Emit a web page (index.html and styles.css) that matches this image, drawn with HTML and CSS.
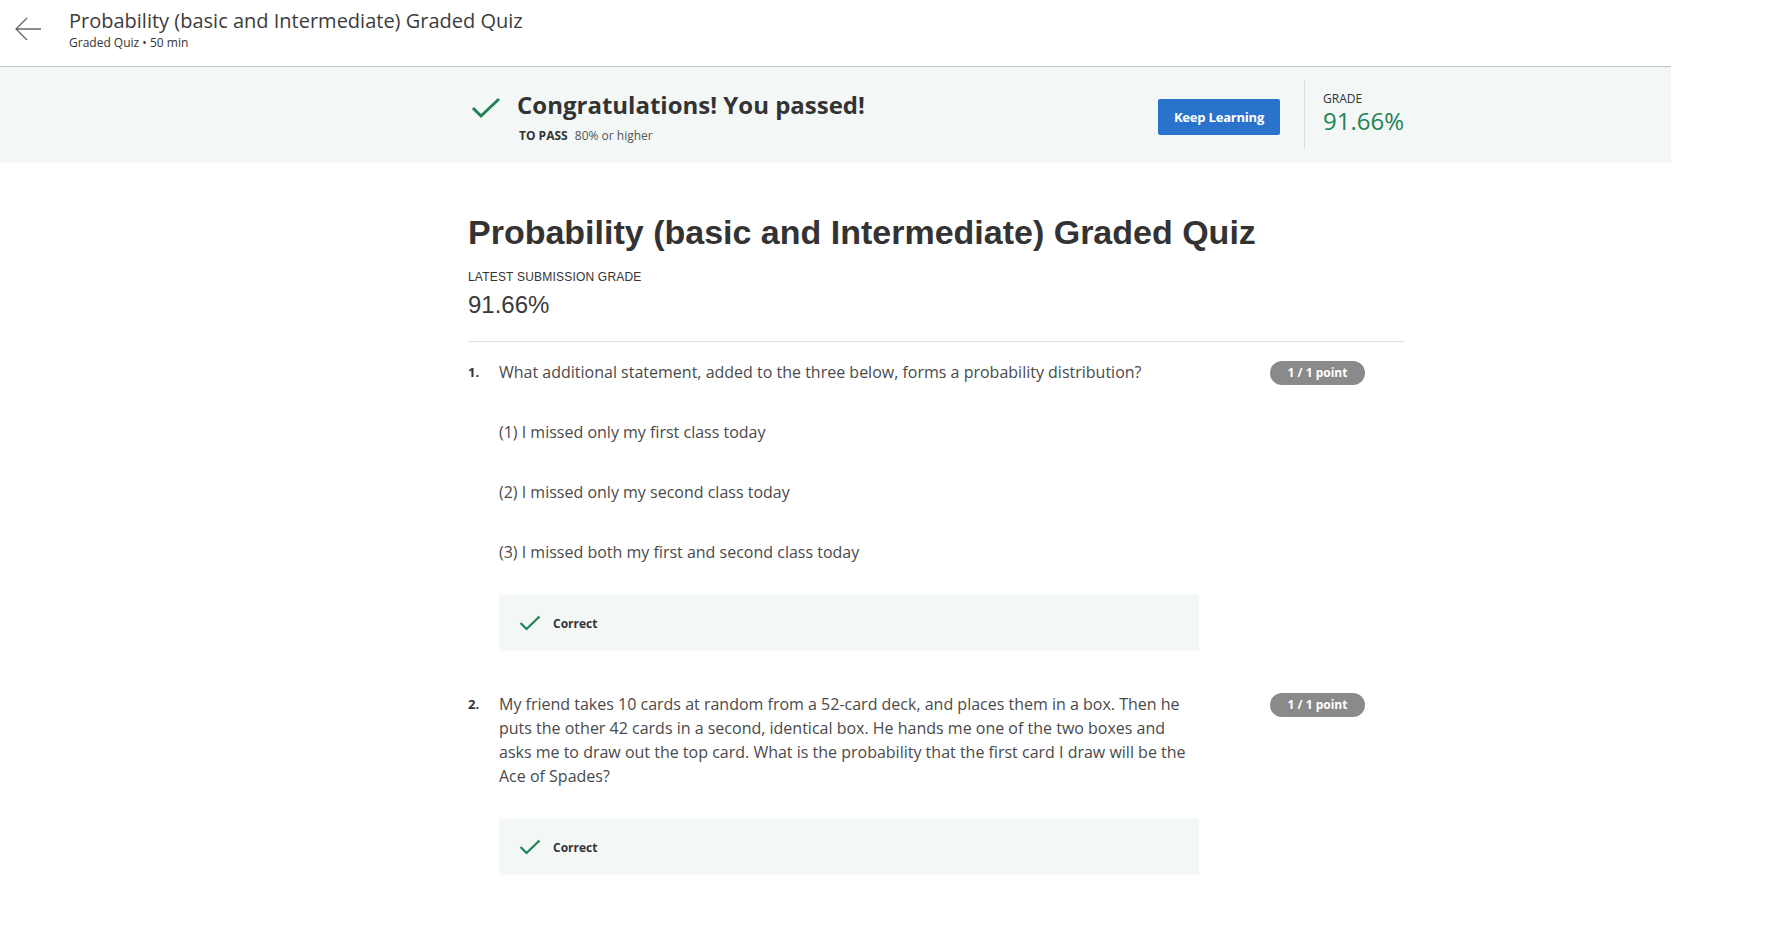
FILE: index.html
```html
<!DOCTYPE html>
<html>
<head>
<meta charset="utf-8">
<link rel="stylesheet" href="styles.css">
</head>
<body>
<div class="page">
  <header class="topbar">
    <button class="back" aria-label="Back">
      <svg width="28" height="26" viewBox="0 0 28 26"><path d="M27 13H2M13 2L2 13l11 11" fill="none" stroke="#666" stroke-width="1.3"/></svg>
    </button>
    <div class="top-titles">
      <div class="top-title">Probability (basic and Intermediate) Graded Quiz</div>
      <div class="top-sub">Graded Quiz • 50 min</div>
    </div>
  </header>

  <section class="banner">
    <div class="container banner-inner">
      <div class="pass">
        <svg class="pass-check" width="30" height="22" viewBox="0 0 30 22"><path d="M2 11l8 8L28 2" fill="none" stroke="#1f8354" stroke-width="3"/></svg>
        <div>
          <div class="pass-title">Congratulations! You passed!</div>
          <div class="pass-sub"><span class="pass-label">TO PASS</span> 80% or higher</div>
        </div>
      </div>
      <div class="banner-right">
        <button class="keep">Keep Learning</button>
        <div class="divider"></div>
        <div class="grade">
          <div class="grade-label">GRADE</div>
          <div class="grade-value">91.66%</div>
        </div>
      </div>
    </div>
  </section>

  <main class="container main">
    <h1 class="quiz-title">Probability (basic and Intermediate) Graded Quiz</h1>
    <div class="latest-label">LATEST SUBMISSION GRADE</div>
    <div class="latest-value">91.66%</div>
    <hr class="rule">

    <div class="question">
      <div class="q-num">1.</div>
      <div class="q-body">
        <p class="q-text">What additional statement, added to the three below, forms a probability distribution?</p>
        <p class="q-opt">(1) I missed only my first class today</p>
        <p class="q-opt">(2) I missed only my second class today</p>
        <p class="q-opt">(3) I missed both my first and second class today</p>
        <div class="correct">
          <svg width="22" height="16" viewBox="0 0 22 16"><path d="M1.5 8l6 6L20.5 1.5" fill="none" stroke="#1f8354" stroke-width="2.2"/></svg>
          <span>Correct</span>
        </div>
      </div>
      <div class="q-score"><span class="pill">1 / 1 point</span></div>
    </div>

    <div class="question">
      <div class="q-num">2.</div>
      <div class="q-body">
        <p class="q-text">My friend takes 10 cards at random from a 52-card deck, and places them in a box. Then he puts the other 42 cards in a second, identical box. He hands me one of the two boxes and asks me to draw out the top card. What is the probability that the first card I draw will be the Ace of Spades?</p>
        <div class="correct">
          <svg width="22" height="16" viewBox="0 0 22 16"><path d="M1.5 8l6 6L20.5 1.5" fill="none" stroke="#1f8354" stroke-width="2.2"/></svg>
          <span>Correct</span>
        </div>
      </div>
      <div class="q-score"><span class="pill">1 / 1 point</span></div>
    </div>
  </main>
</div>
</body>
</html>
```

FILE: styles.css
```css
* { box-sizing: border-box; }
body {
  margin: 0;
  background: #fff;
  font-family: "Open Sans", "Noto Sans", sans-serif;
  color: #1f1f1f;
}
.page { width: 1671px; }

.topbar {
  height: 67px;
  border-bottom: 1px solid #c4c4c4;
  display: flex;
  align-items: flex-start;
}
.back {
  border: 0;
  background: none;
  padding: 0;
  margin: 16px 0 0 13px;
  width: 29px;
  height: 26px;
}
.top-titles { margin: 8px 0 0 27px; }
.top-title { font-size: 20px; line-height: 26px; color: #3c3c3c; }
.top-sub { font-size: 12px; line-height: 18px; color: #333; }

.container { width: 937px; margin-left: 468px; }

.banner { background: #f3f8f7; height: 96px; }
.banner-inner {
  height: 96px;
  display: flex;
  align-items: center;
  justify-content: space-between;
}
.pass { display: flex; align-items: flex-start; padding-top: 2px; }
.pass-check { margin: 8px 16px 0 3px; }
.pass-title { font-size: 24px; font-weight: 700; color: #333; line-height: 32px; }
.pass-sub { font-size: 12px; color: #555; margin-top: 6px; line-height: 17px; padding-left: 2px; }
.pass-label { font-weight: 700; color: #333; margin-right: 4px; }

.banner-right { display: flex; align-items: center; height: 100%; }
.keep {
  background: #2a73cc;
  color: #fff;
  border: 0;
  border-radius: 2px;
  font-family: "Open Sans", sans-serif;
  font-size: 13px;
  font-weight: 700;
  width: 122px;
  height: 36px;
  margin-top: 4px;
  letter-spacing: -0.2px;
}
.divider { width: 1px; height: 68px; background: #dcdcdc; margin: 0 18px 0 24px; }
.grade { width: 82px; padding-bottom: 5px; }
.grade-label { font-size: 12px; color: #333; line-height: 16px; }
.grade-value { font-size: 24px; color: #1f8354; line-height: 28px; }

.main { padding-top: 47px; }
.quiz-title {
  font-family: "Liberation Sans", Arial, sans-serif;
  font-size: 34px;
  font-weight: 700;
  color: #333;
  margin: 0;
  line-height: 44px;
}
.latest-label {
  font-family: "Liberation Sans", Arial, sans-serif;
  font-size: 12px;
  letter-spacing: 0.2px;
  color: #333;
  margin-top: 15px;
  line-height: 16px;
}
.latest-value {
  font-family: "Liberation Sans", Arial, sans-serif;
  font-size: 24px;
  color: #3a3a3a;
  line-height: 30px;
  margin-top: 5px;
}
.rule { border: 0; border-top: 1px solid #e0e0e0; margin: 21px 0 0; }

.question { display: flex; padding-top: 18px; padding-bottom: 23px; }
.q-num { width: 31px; font-size: 13px; font-weight: 700; color: #333; line-height: 24px; }
.q-body { width: 700px; }
.q-text, .q-opt {
  margin: 0;
  font-size: 16px;
  line-height: 24px;
  color: #4a4a4a;
}
.q-opt { margin-top: 36px; }
.correct {
  margin-top: 31px;
  background: #f3f8f7;
  height: 56px;
  display: flex;
  align-items: center;
  padding-left: 20px;
  font-size: 12px;
  font-weight: 700;
  color: #333;
}
.correct svg { margin-right: 12px; }
.q-score { margin-left: 71px; }
.pill {
  display: inline-block;
  background: #8a8a8a;
  color: #fff;
  font-size: 12px;
  font-weight: 700;
  border-radius: 12px;
  height: 24px;
  line-height: 24px;
  width: 95px;
  text-align: center;
}
```
